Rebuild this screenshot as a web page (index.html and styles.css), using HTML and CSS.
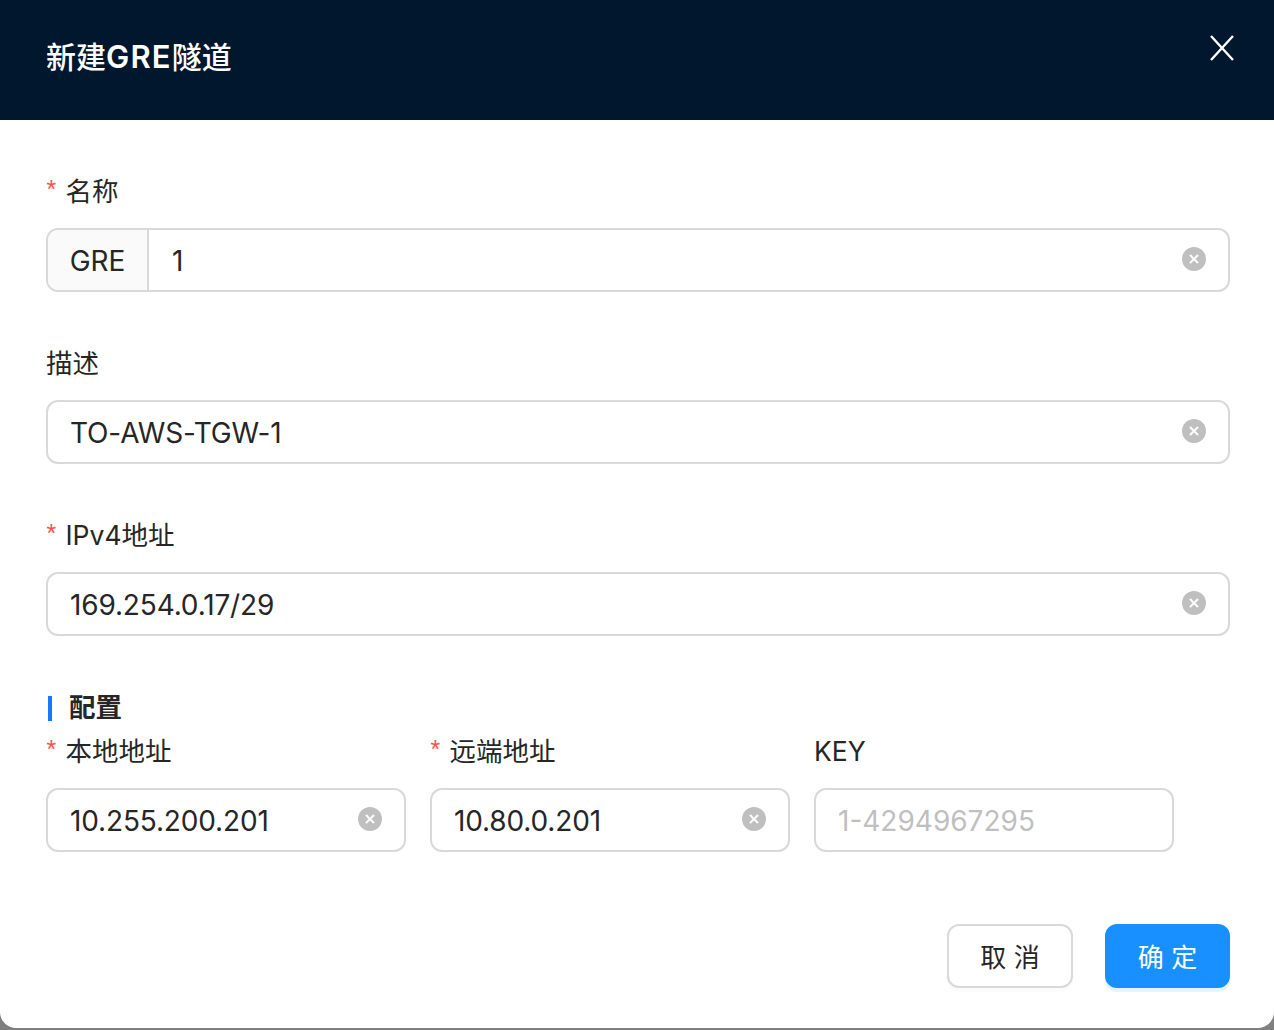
FILE: index.html
```html
<!DOCTYPE html>
<html lang="zh-CN">
<head>
<meta charset="utf-8">
<title>新建GRE隧道</title>
<link rel="stylesheet" href="styles.css">
</head>
<body>
<div class="modal">
  <header class="modal-header">
    <h1 class="modal-title">新建<span class="title-latin">GRE</span>隧道</h1>
    <button class="modal-close" type="button" aria-label="关闭">
      <svg width="24" height="26" viewBox="0 0 24 26"><path d="M1 1 23 25M23 1 1 25" class="close-stroke"/></svg>
    </button>
  </header>
  <main class="modal-body">
    <div class="field">
      <label class="label"><span class="req">*</span>名称</label>
      <div class="input has-addon">
        <span class="addon">GRE</span>
        <span class="value">1</span>
        <span class="clear"><svg width="10" height="10" viewBox="0 0 10 10"><path d="M1 1 9 9M9 1 1 9" class="clear-stroke"/></svg></span>
      </div>
    </div>
    <div class="field">
      <label class="label">描述</label>
      <div class="input">
        <span class="value">TO-AWS-TGW-1</span>
        <span class="clear"><svg width="10" height="10" viewBox="0 0 10 10"><path d="M1 1 9 9M9 1 1 9" class="clear-stroke"/></svg></span>
      </div>
    </div>
    <div class="field">
      <label class="label"><span class="req">*</span>IPv4地址</label>
      <div class="input">
        <span class="value">169.254.0.17/29</span>
        <span class="clear"><svg width="10" height="10" viewBox="0 0 10 10"><path d="M1 1 9 9M9 1 1 9" class="clear-stroke"/></svg></span>
      </div>
    </div>
    <h2 class="section-title">配置</h2>
    <div class="columns">
      <div class="column">
        <label class="label"><span class="req">*</span>本地地址</label>
        <div class="input">
          <span class="value">10.255.200.201</span>
          <span class="clear"><svg width="10" height="10" viewBox="0 0 10 10"><path d="M1 1 9 9M9 1 1 9" class="clear-stroke"/></svg></span>
        </div>
      </div>
      <div class="column">
        <label class="label"><span class="req">*</span>远端地址</label>
        <div class="input">
          <span class="value">10.80.0.201</span>
          <span class="clear"><svg width="10" height="10" viewBox="0 0 10 10"><path d="M1 1 9 9M9 1 1 9" class="clear-stroke"/></svg></span>
        </div>
      </div>
      <div class="column">
        <label class="label">KEY</label>
        <div class="input">
          <span class="value placeholder">1-4294967295</span>
        </div>
      </div>
    </div>
    <footer class="actions">
      <button class="btn" type="button">取 消</button>
      <button class="btn btn-primary" type="button">确 定</button>
    </footer>
  </main>
</div>
</body>
</html>
```
FILE: styles.css
```css
* { box-sizing: border-box; }
html, body { margin: 0; height: 100%; }
body {
  background: #7f7f7f;
  overflow: hidden;
  font-family: Inter, "Noto Sans CJK SC", sans-serif;
  color: #262626;
}
.modal {
  width: 1274px;
  height: 1028px;
  background: #fff;
  border-radius: 0 0 16px 16px;
  overflow: hidden;
  display: flex;
  flex-direction: column;
}
.modal-header {
  height: 120px;
  flex: none;
  background: #00172d;
  padding: 0 40px 0 46px;
  display: flex;
  justify-content: space-between;
  align-items: flex-start;
}
.modal-title {
  margin: 36px 0 0;
  font-size: 30px;
  line-height: 42px;
  font-weight: 500;
  color: #fff;
}
.title-latin { font-weight: 600; font-size: 31px; letter-spacing: 1.2px; }
.modal-close {
  margin-top: 35px;
  padding: 0;
  width: 24px;
  height: 26px;
  border: 0;
  background: none;
  display: block;
}
.close-stroke { stroke: #fff; stroke-width: 2.4; fill: none; }
.modal-body {
  flex: 1;
  padding: 52px 44px 0 46px;
  display: flex;
  flex-direction: column;
}
.field { margin-bottom: 52px; }
.label {
  display: block;
  height: 36px;
  line-height: 38px;
  margin-bottom: 20px;
  font-size: 26.5px;
  white-space: nowrap;
}
.req {
  color: #ff4d4f;
  display: inline-block;
  width: 19px;
  margin-left: .5px;
  font-size: 25px;
  line-height: 1;
  vertical-align: 3px;
  font-family: "Liberation Sans", sans-serif;
}
.input {
  height: 64px;
  border: 2px solid #d9d9d9;
  border-radius: 12px;
  padding: 0 22px 0 22px;
  display: flex;
  align-items: center;
  justify-content: space-between;
  background: #fff;
}
.value {
  font-size: 28px;
  line-height: 40px;
  padding-top: 2px;
  flex: 1;
  white-space: nowrap;
  letter-spacing: -.15px;
}
.placeholder { color: #bfbfbf; letter-spacing: 0; }
.has-addon { padding-left: 0; }
.addon {
  width: 101px;
  align-self: stretch;
  flex: none;
  background: #fafafa;
  border-right: 2px solid #d9d9d9;
  border-radius: 10px 0 0 10px;
  font-size: 28px;
  line-height: 62px;
  text-align: center;
  margin-right: 23px;
}
.clear {
  width: 24px;
  height: 24px;
  border-radius: 50%;
  background: #bfbfbf;
  flex: none;
  display: flex;
  align-items: center;
  justify-content: center;
  margin-top: -2px;
}
.clear-stroke { stroke: #fff; stroke-width: 2; fill: none; }
.section-title {
  margin: 8px 0 4px 2px;
  height: 25px;
  border-left: 4px solid #1677ff;
  padding-left: 17px;
  font-size: 26.5px;
  line-height: 23px;
  font-weight: 700;
}
.columns {
  display: grid;
  grid-template-columns: repeat(3, 360px);
  column-gap: 24px;
  padding-top: 7px;
}
.actions {
  display: flex;
  justify-content: flex-end;
  gap: 32px;
  margin-top: 72px;
}
.btn {
  width: 126px;
  height: 64px;
  border: 2px solid #d9d9d9;
  border-radius: 12px;
  background: #fff;
  color: #262626;
  font: 400 26px/36px Inter, "Noto Sans CJK SC", sans-serif;
  box-shadow: 0 4px 0 rgba(0, 0, 0, .015);
  padding: 4px 0 0;
}
.btn-primary {
  width: 125px;
  background: #1890ff;
  border-color: #1890ff;
  color: #fff;
  box-shadow: 0 4px 0 rgba(5, 145, 255, .1);
}
```
